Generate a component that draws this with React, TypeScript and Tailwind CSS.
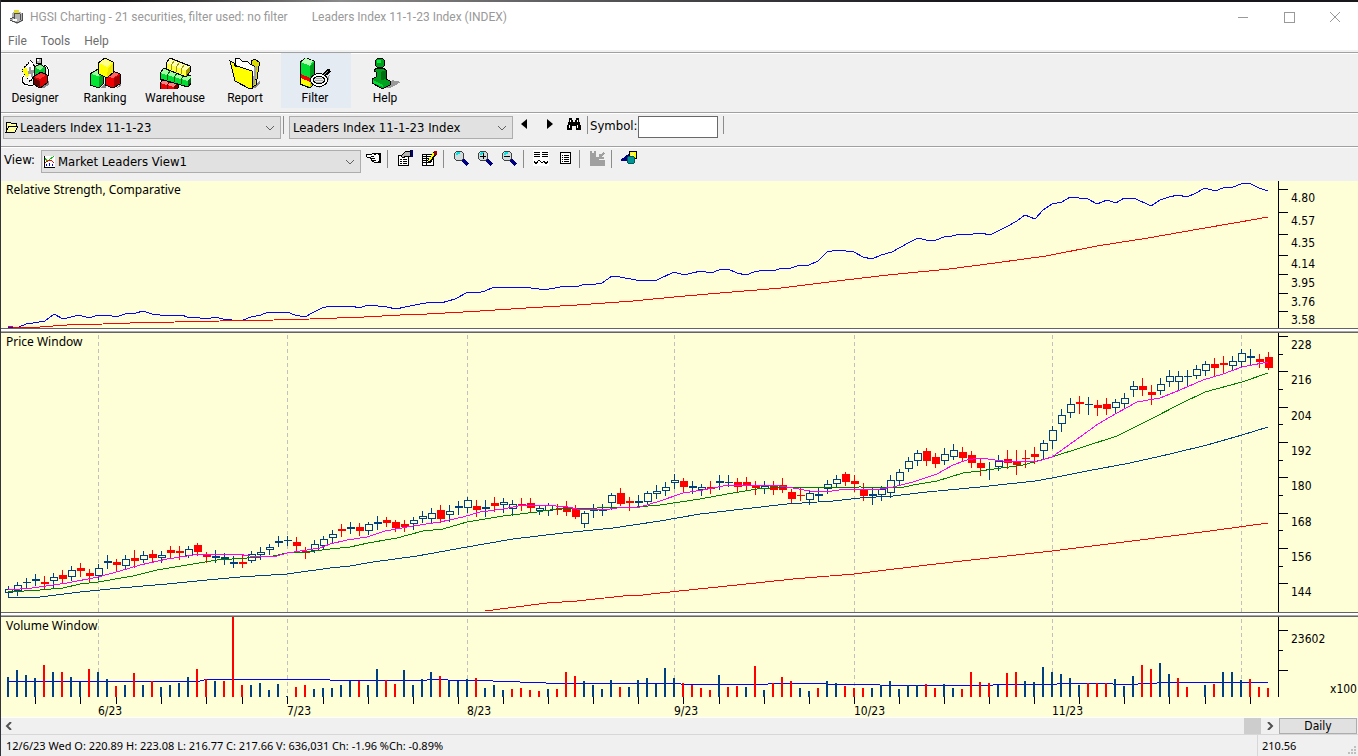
import type { ReactNode } from 'react';

// [rising, high, body top, body bottom, low, volume (negative = down day)]
type Bar = [number, number, number, number, number, number];

const BARS: Bar[] = [
    [1, 253, 256, 260, 265, 20], [1, 249, 252, 258, 263, 27], [1, 245, 249, 250, 256, 22], [1, 241, 246, 248, 253, 19],
    [0, 243, 249, 251, 256, -32], [1, 240, 244, 248, 256, 25], [0, 237, 242, 246, 251, -25], [1, 233, 237, 244, 248, 20],
    [0, 230, 235, 238, 244, 15], [0, 236, 240, 243, 249, -28], [1, 231, 235, 243, 247, 25], [1, 222, 228, 230, 236, 18],
    [0, 226, 229, 232, 239, -11], [1, 222, 226, 233, 236, 12], [0, 217, 225, 228, 235, -24], [1, 218, 222, 227, 230, 12],
    [0, 217, 221, 225, 230, -16], [1, 218, 222, 225, 230, 10], [0, 213, 217, 220, 226, 12], [0, 213, 218, 220, 227, 14],
    [1, 213, 216, 223, 225, 20], [0, 210, 212, 219, 223, -28], [0, 219, 222, 224, 230, -18], [1, 217, 223, 225, 230, 16],
    [1, 220, 224, 226, 232, -16], [1, 223, 229, 231, 235, -80], [0, 221, 229, 231, 235, -12], [1, 218, 221, 228, 230, 12],
    [1, 214, 219, 222, 227, 14], [1, 211, 214, 217, 222, 7], [1, 203, 208, 210, 214, 13], [1, 203, 207, 208, 213, 1],
    [0, 204, 209, 213, 218, -10], [0, 214, 218, 220, 226, -12], [1, 207, 211, 218, 220, 8], [1, 203, 206, 213, 216, 9],
    [1, 197, 201, 205, 210, 9], [0, 191, 196, 198, 204, 12], [1, 189, 194, 196, 201, 16], [0, 190, 194, 198, 203, -16],
    [1, 189, 191, 198, 202, 12], [1, 183, 189, 191, 197, 28], [0, 184, 187, 190, 194, -17], [0, 187, 189, 195, 199, -13],
    [0, 187, 191, 194, 199, 27], [1, 184, 187, 191, 197, 12], [1, 178, 183, 186, 190, 18], [1, 175, 180, 186, 191, 25],
    [0, 172, 177, 186, 190, -21], [1, 172, 178, 182, 189, 16], [1, 168, 173, 175, 182, 16], [1, 164, 167, 175, 180, 18],
    [0, 167, 173, 177, 184, -19], [1, 167, 174, 176, 184, 9], [0, 164, 170, 173, 179, 12], [1, 165, 169, 172, 180, 7],
    [1, 167, 171, 176, 183, -8], [0, 165, 171, 173, 178, -9], [0, 165, 170, 175, 180, -7], [1, 173, 175, 178, 182, -6],
    [1, 170, 172, 178, 183, 8], [0, 171, 176, 177, 182, -8], [0, 168, 174, 179, 183, -25], [0, 172, 176, 184, 186, -21],
    [1, 178, 180, 191, 195, 16], [1, 171, 177, 178, 185, 12], [1, 171, 176, 178, 183, 8], [1, 160, 162, 170, 177, 17],
    [0, 155, 160, 171, 173, -10], [0, 164, 168, 170, 178, 10], [1, 162, 168, 170, 175, 17], [1, 158, 160, 169, 172, 19],
    [1, 152, 158, 161, 166, 13], [1, 149, 154, 158, 163, 29], [1, 141, 147, 150, 156, 19], [0, 145, 148, 154, 160, -14],
    [1, 148, 153, 155, 161, -12], [1, 151, 154, 157, 163, -9], [0, 148, 154, 156, 161, -7], [1, 142, 148, 150, 157, 22],
    [1, 142, 149, 150, 154, -10], [0, 145, 149, 154, 159, -11], [0, 144, 149, 152, 157, 10], [0, 148, 153, 155, 162, -31],
    [1, 148, 153, 156, 161, 7], [0, 148, 153, 157, 162, -14], [0, 145, 152, 157, 160, -20], [0, 156, 159, 166, 170, -16],
    [0, 155, 162, 163, 168, 9], [1, 158, 160, 167, 172, 6], [1, 154, 161, 163, 168, -9], [1, 147, 151, 156, 161, 16],
    [1, 142, 146, 151, 155, 14], [0, 139, 141, 149, 153, -11], [0, 142, 148, 151, 159, -9], [0, 150, 157, 163, 168, -9],
    [1, 155, 161, 163, 172, 9], [1, 153, 156, 162, 168, 12], [1, 142, 147, 160, 165, 16], [1, 136, 139, 148, 152, 8],
    [1, 124, 128, 136, 139, 12], [1, 117, 120, 128, 133, 12], [0, 115, 118, 128, 133, -13], [0, 120, 124, 131, 135, -9],
    [1, 115, 121, 128, 132, 13], [1, 111, 117, 124, 127, 9], [0, 114, 119, 125, 129, -8], [0, 118, 122, 130, 135, -25],
    [0, 125, 130, 135, 143, -15], [1, 129, 136, 137, 147, -14], [1, 122, 128, 134, 138, 12], [0, 117, 126, 130, 136, -24],
    [0, 117, 129, 132, 142, -25], [0, 117, 125, 126, 135, 16], [0, 114, 121, 124, 131, 15], [1, 107, 110, 118, 126, 30],
    [1, 93, 97, 108, 116, 25], [1, 76, 82, 91, 99, 23], [1, 65, 71, 80, 85, 19], [0, 63, 69, 71, 81, 12],
    [1, 64, 71, 72, 82, -14], [0, 67, 72, 75, 83, -14], [0, 65, 71, 76, 82, -14], [1, 66, 69, 75, 80, 18],
    [1, 60, 65, 71, 75, 11], [1, 48, 53, 57, 64, 21], [0, 45, 53, 57, 63, -32], [0, 52, 59, 62, 72, -28],
    [1, 45, 51, 58, 62, 34], [1, 37, 43, 49, 54, 23], [1, 38, 43, 49, 57, -19], [1, 37, 43, 44, 53, -10],
    [1, 32, 36, 43, 46, 0], [1, 28, 31, 38, 43, 12], [0, 25, 31, 35, 43, -13], [0, 23, 30, 32, 41, 25],
    [1, 23, 28, 33, 38, 25], [1, 16, 20, 29, 34, 17], [1, 16, 23, 25, 32, -18], [0, 21, 26, 29, 35, -10],
    [0, 19, 24, 35, 37, -9],
];

const RS_LINE = '8,146 19,146 26,143 33,142 45,140 54,133 63,138 71,136 79,134 89,137 98,134 108,134 116,136 125,133 136,132 143,130 152,133 160,134 182,134 187,136 200,137 207,138 215,136 223,138 232,139 243,139 251,136 261,134 268,131 287,131 295,134 305,136 312,132 322,127 330,125 352,125 359,127 368,124 387,126 396,128 405,126 420,123 432,121 441,122 455,118 468,111 477,112 485,110 494,106 515,107 523,106 539,108 549,108 566,105 576,106 585,103 596,103 602,102 612,95 620,96 636,99 657,99 674,91 684,94 692,92 701,90 711,92 719,89 728,88 737,92 746,94 754,91 764,89 773,90 782,87 791,87 800,84 809,84 818,80 827,71 837,69 854,71 863,76 872,78 881,74 892,71 899,67 910,61 918,57 926,59 936,59 944,56 952,55 960,53 973,53 981,52 990,54 998,50 1008,45 1017,40 1025,34 1035,38 1043,29 1052,23 1062,21 1070,16 1088,18 1097,23 1107,19 1116,22 1124,17 1134,17 1151,25 1160,19 1169,16 1178,14 1187,16 1196,12 1205,7 1215,10 1223,7 1233,6 1241,3 1249,2 1259,7 1268,10';
const RS_AVG = '8,145 13,146 40,146 67,144 103,143 130,142 175,141 220,140 274,139 310,138 337,137 364,136 400,134 427,133 463,131 480,130 526,127 577,124 633,120 674,116 720,112 781,107 837,100 888,94 949,88 995,82 1046,75 1097,65 1148,57 1199,48 1240,41 1268,36';
const MA_10 = '8,257 32,255 67,250 98,244 120,238 140,232 167,226 200,221 237,221 250,223 277,223 287,220 307,217 320,215 330,211 347,207 367,204 385,198 402,195 413,193 440,189 463,184 480,179 503,176 523,172 543,172 568,174 577,176 603,177 617,175 640,174 650,171 660,168 683,160 703,157 723,153 743,152 773,152 793,155 810,158 832,158 847,156 880,156 893,154 913,149 937,141 953,132 967,127 980,125 1003,128 1035,129 1052,124 1080,104 1098,91 1117,80 1137,69 1160,65 1180,57 1203,47 1223,41 1242,34 1268,29';
const MA_17 = '8,259 40,257 63,255 80,251 98,249 133,243 157,237 193,231 217,227 247,225 273,223 287,220 307,219 330,216 350,214 368,210 397,205 423,198 443,196 467,189 503,183 537,179 563,175 597,175 637,174 660,172 700,166 727,161 757,156 783,154 827,155 860,154 900,155 913,152 937,148 963,140 980,138 1023,132 1052,124 1080,115 1117,103 1153,85 1180,71 1205,59 1242,49 1268,40';
const MA_50 = '8,265 40,264 80,259 120,255 167,251 207,247 240,244 287,241 330,235 350,233 373,229 417,223 467,214 513,206 563,200 613,195 660,188 700,181 743,176 787,171 833,168 860,165 893,163 927,159 980,154 1035,148 1052,145 1087,138 1130,130 1170,121 1207,112 1242,102 1268,94';
const MA_200 = '485,278 547,270 577,268 623,263 643,262 660,260 737,252 793,246 854,241 927,232 980,226 1052,218 1140,207 1210,198 1268,190';
const VOL_AVG = '8,64 13,64 77,65 93,64 200,64 204,63 230,62 327,62 330,63 427,63 430,62 445,62 448,63 490,63 493,64 517,64 520,65 543,65 546,66 678,66 681,67 768,67 771,66 823,66 826,67 877,67 880,68 993,68 996,67 1057,67 1060,66 1110,66 1113,67 1138,67 1141,66 1157,66 1160,65 1268,65';

const MONTHS = [
    { bar: 10, label: '6/23' },
    { bar: 31, label: '7/23' },
    { bar: 51, label: '8/23' },
    { bar: 74, label: '9/23' },
    { bar: 94, label: '10/23' },
    { bar: 116, label: '11/23' },
    { bar: 137, label: '' },
];
const WEEKS = [3, 8, 12, 17, 22, 26, 31, 35, 40, 45, 50, 55, 60, 65, 70, 75, 79, 84, 89, 94, 99, 104, 109, 114, 119, 124, 129, 133, 138];

const RS_TICKS: [number, string][] = [[8, '4.80'], [31, '4.57'], [53, '4.35'], [74, '4.14'], [93, '3.95'], [112, '3.76'], [130, '3.58']];
const PRICE_TICKS: [number, string][] = [[3, '228'], [38, '216'], [74, '204'], [109, '192'], [144, '180'], [180, '168'], [215, '156'], [250, '144']];
const VOL_TICKS: [number, string][] = [[13, '23602'], [53, '']];

const barX = (i: number) => 8 + i * 9;

function Line({ points, color }: { points: string; color: string }) {
    return <polyline points={points} fill="none" stroke={color} strokeWidth="1" />;
}

function MonthGrid({ height }: { height: number }) {
    return (
        <g stroke="#c0c0c0" strokeDasharray="4 3">
            {MONTHS.map((m) => (
                <path key={m.bar} d={`M${barX(m.bar)} 2V${height}`} />
            ))}
        </g>
    );
}

function Axis({ ticks, minor = [], height, children }: { ticks: [number, string][]; minor?: number[]; height: number; children?: ReactNode }) {
    return (
        <svg className="h-full w-20 shrink-0" shapeRendering="crispEdges">
            <rect width="1" height={height} />
            {minor.map((y) => (
                <rect key={y} y={y} width="5" height="1" />
            ))}
            {ticks.map(([y, label]) => (
                <g key={y}>
                    <rect y={y} width="10" height="1" />
                    <text x="13" y={y + 13}>{label}</text>
                </g>
            ))}
            {children}
        </svg>
    );
}

function Panel({ title, className, children, axis }: { title: string; className: string; children: ReactNode; axis: ReactNode }) {
    return (
        <section className={`flex bg-[#ffffd7] text-xs ${className}`} aria-label={title}>
            <svg className="h-full min-w-0 flex-1" shapeRendering="crispEdges">
                <g transform="translate(-1 0)">
                    {children}
                    <text x="6" y="13" className="font-['Noto_Sans',sans-serif]">{title}</text>
                </g>
            </svg>
            {axis}
        </section>
    );
}

function Splitter() {
    return <div className="h-[5px] shrink-0 border-y border-[#646464] bg-white shadow-[inset_0_-1px_0_#a8a8a8]" />;
}

function Separator() {
    return <div className="h-[18px] w-px shrink-0 bg-[#8c8c8c]" />;
}

/* Toolbar pictures, drawn on a 32px grid */
function DesignerIcon() {
    return (
        <svg className="size-8" viewBox="0 0 32 32" shapeRendering="crispEdges">
            <path d="M22 31l8-8v5l-5 3z" fill="#888" />
            <path d="M3 13L12 3l6 11-7 11z" fill="#fff" stroke="#000" strokeDasharray="2 1" />
            <path d="M3 13l4-4 3 9-2 3z" fill="#ffff00" />
            <path d="M10 10h2v3h4v3h-2v4h-2v-3h-3v-3h1z" fill="#999" />
            <path d="M25 8c6 2 6 11 1 16M5 19c-4 4-1 9 4 9h5" fill="none" stroke="#fff" strokeWidth="3" />
            <path d="M25 8c6 2 6 11 1 16M5 19c-4 4-1 9 4 9h5" fill="none" stroke="#000" />
            <path d="M15 10l6-3 5 3v9H15z" fill="#00c832" stroke="#000" />
            <path d="M16 10l5-2 4 2-4 3z" fill="#8cf08c" />
            <circle cx="20" cy="4" r="3" fill="#b4b4b4" stroke="#000" />
            <rect x="18" y="2" width="2" height="2" fill="#fff" />
            <path d="M14 20l8-5 6 3v8l-7 5-7-4z" fill="#dc0000" stroke="#000" />
            <path d="M15 21l6 3v6l-6-3z" fill="#640000" />
            <path d="M15 20l7-4 5 2-6 4z" fill="#ff3232" />
        </svg>
    );
}

function RankingIcon() {
    return (
        <svg className="size-8" viewBox="0 0 32 32" shapeRendering="crispEdges">
            <path d="M12 31l5-6v6zM28 31l4-6v4z" fill="#888" />
            <path d="M1 17l8-5 5 3v12l-4 4-9-3z" fill="#00e632" stroke="#000" />
            <path d="M10 20l4-4v10l-4 4z" fill="#00a020" />
            <path d="M2 17l7-4 4 2-4 4z" fill="#a0ffa0" />
            <path d="M16 20l8-6 7 3v10l-7 4-8-3z" fill="#f00000" stroke="#000" />
            <path d="M25 21l6-3v8l-6 4z" fill="#a00000" />
            <path d="M17 19l7-4 6 2-6 4z" fill="#ff6464" />
            <path d="M9 6l7-5 8 4 1 10-7 6-8-4z" fill="#ffff00" stroke="#000" />
            <path d="M19 11l5-4v8l-6 5z" fill="#f0e600" />
            <path d="M10 6l6-4 7 4-5 4z" fill="#ffff8c" />
        </svg>
    );
}

/* A slanted row of n boxes, each one `step` wide */
function BoxRow({ x, y, n, step, fill, side, top }: { x: number; y: number; n: number; step: number; fill: string; side: string; top: string }) {
    const w = n * step;
    const drop = n * 2;
    return (
        <g transform={`translate(${x} ${y})`}>
            <path d={`M0 5L${w} ${5 + drop}v6L0 11z`} fill={fill} />
            <path d={`M0 5l4-5L${w + 4} ${drop}l-4 5z`} fill={top} />
            <path d={`M${w} ${5 + drop}l4-5v6l-4 5z`} fill={side} />
            {Array.from({ length: n - 1 }, (_, i) => (
                <path key={i} d={`M${(i + 1) * step} ${7 + i * 2}v5M${(i + 1) * step} ${7 + i * 2}l4-5`} stroke={side} />
            ))}
            <path d={`M0 5l4-5L${w + 4} ${drop}v6l-4 5L0 11z`} fill="none" stroke="#000" />
        </g>
    );
}

function WarehouseIcon() {
    return (
        <svg className="size-8" viewBox="0 0 32 32" shapeRendering="crispEdges">
            <BoxRow x={1} y={21} n={2} step={7} fill="#f00000" side="#780000" top="#ff8080" />
            <BoxRow x={1} y={11} n={4} step={7} fill="#00dc32" side="#006414" top="#a0ffa0" />
            <BoxRow x={7} y={1} n={4} step={5} fill="#ffff3c" side="#a09600" top="#ffffb4" />
        </svg>
    );
}

function ReportIcon() {
    return (
        <svg className="size-8" viewBox="0 0 32 32" shapeRendering="crispEdges">
            <path d="M24 31l7-8v3l-4 5z" fill="#888" />
            <path d="M22 4l4-2 4 3v4l-3 19-4 2z" fill="#dcdc00" stroke="#000" />
            <path d="M6 8V1l5 1 3 3 4-1 3 3 4 2 1 13z" fill="#fff" stroke="#000" />
            <path d="M25 10l3-1-2 17-2 2z" fill="#a0a0a0" />
            <path d="M1 4l4 2 1 3 5 1 12 4 1 17-3 1-15-8z" fill="#ffff00" stroke="#000" />
        </svg>
    );
}

function FilterIcon() {
    return (
        <svg className="size-8" viewBox="0 0 32 32" shapeRendering="crispEdges">
            <path d="M20 31l9-6 2-8-8 8z" fill="#999" />
            <path d="M1 5l6-4 8 3v22l-4 5-10-4z" fill="#00dc32" stroke="#000" />
            <path d="M2 5l5-4 7 3-3 5z" fill="#b4ffb4" />
            <path d="M11 10l4-5v12l-4 4z" fill="#00a01e" />
            <path d="M2 17l9 4 4-3v4l-4 3-9-4z" fill="#f00000" />
            <path d="M2 21l9 4v5l-9-3z" fill="#ffff00" />
            <path d="M11 25l4-3v4l-4 4z" fill="#d2c800" />
            <path d="M25 18l6-5" stroke="#000" strokeWidth="4" />
            <path d="M25 18l4-4" stroke="#aaa" />
            <ellipse cx="20" cy="23" rx="7" ry="5" fill="#e6e6e6" stroke="#000" strokeWidth="4" />
            <ellipse cx="20" cy="23" rx="7" ry="5" fill="none" stroke="#fff" strokeWidth="2" />
            <path d="M16 23h8M17 21h6M17 25h6" stroke="#aaa" />
        </svg>
    );
}

function HelpIcon() {
    return (
        <svg className="size-8" viewBox="0 0 32 32" shapeRendering="crispEdges">
            <path d="M15 31l8-8 9 2-5 3-6 3z" fill="#999" />
            <path d="M5 13l3-2h6l3 2v9l4 2v4l-6 3h-3L3 26v-4l4-2v-5l-2-1z" fill="#00a01e" stroke="#000" />
            <path d="M12 15l5-2v9l-5 1z" fill="#006e14" />
            <path d="M4 23l10 5v2L4 26z" fill="#00dc32" />
            <circle cx="11" cy="6" r="5" fill="#00a01e" stroke="#000" />
            <path d="M8 3h4v3H8z" fill="#00f03c" />
        </svg>
    );
}

/* Small 16px icons */
function SmallIcon({ children }: { children: ReactNode }) {
    return (
        <svg className="size-4" viewBox="0 0 16 16" shapeRendering="crispEdges" fill="none" stroke="#000">
            {children}
        </svg>
    );
}

function Magnifier({ sign }: { sign?: string }) {
    return (
        <SmallIcon>
            <path d="M10 10l5 5" stroke="#000080" strokeWidth="3" />
            <circle cx="6" cy="6" r="5" fill="#d2dcdc" stroke="#404040" />
            <path d="M3 5l2-2h2" stroke="#00e6e6" strokeWidth="2" />
            {sign && <path d={sign} />}
        </SmallIcon>
    );
}

const TOOLS = [
    { label: 'Designer', icon: <DesignerIcon /> },
    { label: 'Ranking', icon: <RankingIcon /> },
    { label: 'Warehouse', icon: <WarehouseIcon /> },
    { label: 'Report', icon: <ReportIcon /> },
    { label: 'Filter', icon: <FilterIcon />, active: true },
    { label: 'Help', icon: <HelpIcon /> },
];

function Combo({ label, value, className, pad, icon }: { label: string; value: string; className: string; pad: string; icon?: ReactNode }) {
    return (
        <div className={`relative h-[23px] ${className}`}>
            <select aria-label={label} className={`block h-full w-full appearance-none border border-[#adadad] bg-[#e1e1e1] text-[13px] leading-5 ${pad}`}>
                <option>{value}</option>
            </select>
            {icon && <span className="pointer-events-none absolute top-1 left-0.5">{icon}</span>}
            <svg className="pointer-events-none absolute top-2 right-1.5 h-2 w-2.5" viewBox="0 0 10 8" fill="none" stroke="#606060">
                <path d="M1 2l4 4 4-4" />
            </svg>
        </div>
    );
}

function IconButton({ label, className, children }: { label: string; className?: string; children: ReactNode }) {
    return (
        <button type="button" aria-label={label} className={`flex h-4 w-4 shrink-0 items-center justify-center ${className ?? ''}`}>
            {children}
        </button>
    );
}

export default function App() {
    return (
        <div className="flex min-h-screen flex-col overflow-hidden border-l border-[#33333b] bg-[#f0f0f0] font-['DejaVu_Sans_Condensed','DejaVu_Sans',sans-serif] text-black">
            <div className="h-0.5 bg-linear-to-r from-[#141414] from-8% via-[#8a8a8a] via-25% to-[#17171c] to-70%" />

            {/* Title bar */}
            <header className="flex h-[30px] items-center bg-white pr-[17px] pl-2 font-['Roboto',sans-serif] text-xs text-[#999999]">
                <svg className="size-4" viewBox="0 0 16 16" shapeRendering="crispEdges">
                    <path d="M1 10l2-1V4l3-2 6 1 2 3v6l-6 3-7-4z" fill="#b4b4b4" />
                    <path d="M5 1h5v3H5z" fill="#e6dc28" />
                    <path d="M5 4v6M6 4l5 1v6M13 4v8M1 11l7 3 6-3M1 10l4-2" fill="none" stroke="#505050" />
                    <path d="M4 10h4v2H4z" fill="#fff" />
                </svg>
                <h1 className="ml-[5px] whitespace-nowrap">HGSI Charting - 21 securities, filter used: no filter</h1>
                <span className="ml-6 whitespace-nowrap">Leaders Index 11-1-23 Index (INDEX)</span>
                <div className="ml-auto flex gap-[34px]">
                    <button type="button" aria-label="Minimize"><svg className="size-3" viewBox="0 0 12 12" stroke="#999" shapeRendering="crispEdges"><path d="M1 6h10" /></svg></button>
                    <button type="button" aria-label="Maximize"><svg className="size-3" viewBox="0 0 12 12" stroke="#999" fill="none" shapeRendering="crispEdges"><path d="M1 1h10v10H1z" /></svg></button>
                    <button type="button" aria-label="Close"><svg className="size-3" viewBox="0 0 12 12" stroke="#999"><path d="M1 1l10 10M11 1L1 11" /></svg></button>
                </div>
            </header>

            {/* Menu */}
            <nav className="flex h-[18px] items-center gap-3.5 bg-white pl-[7px] font-['Roboto',sans-serif] text-xs text-[#6d6d6d]">
                <button type="button">File</button>
                <button type="button">Tools</button>
                <button type="button">Help</button>
            </nav>

            {/* Main toolbar */}
            <div className="mt-0.5 flex h-[60px] border-t border-[#a0a0a0] pb-1 shadow-[inset_0_1px_0_#fff]">
                {TOOLS.map((t) => (
                    <button key={t.label} type="button" className={`flex w-[70px] flex-col items-center pt-1 pr-0.5 font-['Roboto',sans-serif] text-xs leading-[18px] ${t.active ? 'bg-[#e5ebf3]' : ''}`}>
                        {t.icon}
                        <span>{t.label}</span>
                    </button>
                ))}
            </div>

            {/* Security selection */}
            <div className="flex h-[34px] items-start border-t border-[#a0a0a0] pt-[3px] pl-0.5 shadow-[inset_0_1px_0_#fff]">
                <Combo
                    label="Group"
                    value="Leaders Index 11-1-23"
                    className="w-[278px]"
                    pad="pl-4"
                    icon={
                        <svg className="h-3.5 w-3.5" viewBox="0 0 14 14" shapeRendering="crispEdges">
                            <path d="M1 12V3l1-1h3l1 1h5v3" fill="#ffffa0" stroke="#000" />
                            <path d="M1 12l3-6h9l-3 6z" fill="#ffffa0" stroke="#000" />
                        </svg>
                    }
                />
                <div className="mx-0.5"><Separator /></div>
                <Combo label="Security" value="Leaders Index 11-1-23 Index" className="ml-[3px] w-56" pad="pl-[3px]" />
                <IconButton label="Previous" className="ml-[3px]"><svg className="h-2.5 w-1.5" viewBox="0 0 6 10"><path d="M6 0v10L0 5z" /></svg></IconButton>
                <IconButton label="Next" className="ml-2.5"><svg className="h-2.5 w-1.5" viewBox="0 0 6 10"><path d="M0 0v10l6-5z" /></svg></IconButton>
                <IconButton label="Find" className="ml-2">
                    <SmallIcon>
                        <path d="M3 2h3v2h1v2h2V4h1V2h3v3l2 5v4h-5v-4H6v4H1v-4l2-5z" fill="#000" stroke="none" />
                        <path d="M4 4v2M11 4v2M3 9v3M11 9v3" stroke="#fff" />
                    </SmallIcon>
                </IconButton>
                <div className="mr-0.5 ml-[5px]"><Separator /></div>
                <label htmlFor="symbol" className="text-[13px] leading-5">Symbol:</label>
                <input id="symbol" type="text" className="h-[22px] w-20 border border-[#696969] bg-white px-1 text-[13px]" />
                <div className="ml-[5px]"><Separator /></div>
            </div>

            {/* View toolbar */}
            <div className="flex h-[35px] items-start border-t border-[#a0a0a0] pt-[3px] pl-[3px] shadow-[inset_0_1px_0_#fff]">
                <span className="text-[13px] leading-5">View:</span>
                <Combo
                    label="View"
                    value="Market Leaders View1"
                    className="ml-1.5 w-80"
                    pad="pl-4"
                    icon={
                        <svg className="h-3.5 w-3" viewBox="0 0 12 14" shapeRendering="crispEdges" fill="none">
                            <path d="M0 2h12v11H0z" fill="#fff" />
                            <path d="M1 3l3 4 2-1 5-4" stroke="#00c800" />
                            <path d="M1 9l4-2 3-1 3 3" stroke="#f00" />
                            <path d="M3 12v-2M6 12V9M9 12v-2" stroke="#00f" />
                            <path d="M1 2v11h11" stroke="#000" />
                        </svg>
                    }
                />
                <IconButton label="Point" className="ml-1">
                    <SmallIcon>
                        <path d="M1 5l1-1h5l2-1h4v9H9l-2-1-1-2-1-1 1-1H2z" fill="#fff" />
                        <path d="M6 6h3M6 8h4M7 10h4M9 4l2 1" />
                        <path d="M14 3v10" strokeWidth="3" />
                        <path d="M13 5v6" stroke="#fff" />
                    </SmallIcon>
                </IconButton>
                <div className="mr-[9px] ml-1.5"><Separator /></div>
                <IconButton label="Properties">
                    <SmallIcon>
                        <path d="M1 5h10v10H1z" fill="#fff" />
                        <path d="M3 9h2M6 9h4M3 11h2M6 11h4M3 13h2M6 13h4" />
                        <path d="M4 6l4-4 5-1v5H9L6 8z" fill="#b4b4b4" />
                        <path d="M15 0v7" stroke="#000080" strokeWidth="2" />
                    </SmallIcon>
                </IconButton>
                <IconButton label="Edit" className="ml-2">
                    <SmallIcon>
                        <path d="M1 4h11v11H1z" fill="#fff" />
                        <path d="M1 6h11M2 8h7M2 10h7M2 12h7M5 4v11" />
                        <path d="M8 12l6-9" strokeWidth="4" />
                        <path d="M8 11l5-8" stroke="#ffff00" strokeWidth="2" />
                        <path d="M13 1h2v3h-2z" fill="#a00000" stroke="#a00000" />
                    </SmallIcon>
                </IconButton>
                <div className="mr-[9px] ml-1.5"><Separator /></div>
                <IconButton label="Zoom"><Magnifier /></IconButton>
                <IconButton label="Zoom in" className="ml-2"><Magnifier sign="M3 6h6M6 3v6" /></IconButton>
                <IconButton label="Zoom out" className="ml-2"><Magnifier sign="M3 6h6" /></IconButton>
                <div className="mr-[9px] ml-1.5"><Separator /></div>
                <IconButton label="Chart list">
                    <SmallIcon>
                        <path d="M0 0h16v16H0z" fill="#fff" stroke="none" />
                        <path d="M1 2h6M9 2h6M1 4h6M9 4h6M1 6h6M9 6h6" />
                        <path d="M1 11l2 3 3-4 3 3 2-2 2 3 2-3" />
                    </SmallIcon>
                </IconButton>
                <IconButton label="Report list" className="ml-2">
                    <SmallIcon>
                        <path d="M3 2h10v11H3z" fill="#fff" />
                        <path d="M5 5h1M7 5h5M5 7h1M7 7h5M5 9h1M7 9h5M5 11h1M7 11h5" />
                    </SmallIcon>
                </IconButton>
                <div className="mr-[9px] ml-1.5"><Separator /></div>
                <IconButton label="Export">
                    <SmallIcon>
                        <path d="M1 1h2v2h2V1h2v6h3v3h6v6H1z" fill="#a0a0a0" stroke="none" />
                        <path d="M15 3l-4 4M11 4v4h4" stroke="#a0a0a0" strokeWidth="2" />
                    </SmallIcon>
                </IconButton>
                <div className="mr-[9px] ml-1.5"><Separator /></div>
                <IconButton label="Shapes">
                    <SmallIcon>
                        <path d="M8 1h7v7H8z" fill="#ffff00" />
                        <path d="M10 3l3 3M13 3l-3 3" stroke="#fff" />
                        <path d="M0 10l7-5v5z" fill="#000080" stroke="#000080" />
                        <circle cx="10" cy="10" r="4" fill="#009696" stroke="#005a5a" />
                    </SmallIcon>
                </IconButton>
            </div>

            <Panel
                title="Relative Strength, Comparative"
                className="h-[147px]"
                axis={<Axis ticks={RS_TICKS} height={147} />}
            >
                <Line points={RS_LINE} color="#0000ff" />
                <Line points={RS_AVG} color="#ff0000" />
            </Panel>
            <Splitter />
            <Panel
                title="Price Window"
                className="h-[279px]"
                axis={<Axis ticks={PRICE_TICKS} minor={[21, 56, 91, 127, 162, 197, 233]} height={279} />}
            >
                <MonthGrid height={279} />
                {BARS.map(([up, high, top, bottom, low], i) => {
                    const x = barX(i);
                    const color = up ? '#004080' : '#ff0000';
                    return (
                        <g key={i} fill={color}>
                            <rect x={x} y={high} width="1" height={low - high} />
                            <rect x={x - 3} y={top} width="8" height={bottom - top} />
                            {up === 1 && bottom - top > 2 && (
                                <rect x={x - 2} y={top + 1} width="6" height={bottom - top - 2} fill="#ffffd7" />
                            )}
                        </g>
                    );
                })}
                <Line points={MA_50} color="#004080" />
                <Line points={MA_17} color="#008000" />
                <Line points={MA_200} color="#ff0000" />
                <Line points={MA_10} color="#ff00ff" />
            </Panel>
            <Splitter />
            <Panel
                title="Volume Window"
                className="h-[100px]"
                axis={
                    <Axis ticks={VOL_TICKS} minor={[33]} height={80}>
                        <text x="79" y="76" textAnchor="end">x100</text>
                    </Axis>
                }
            >
                <MonthGrid height={80} />
                <Line points={VOL_AVG} color="#0000ff" />
                {BARS.map(([, , , , , vol], i) => (
                    <rect key={i} x={barX(i) - 1} y={80 - Math.abs(vol)} width="2" height={Math.abs(vol)} fill={vol < 0 ? '#ff0000' : '#004080'} />
                ))}
                {WEEKS.map((w) => (
                    <rect key={w} x={barX(w)} y="80" width="1" height="7" />
                ))}
                {MONTHS.map((m) => (
                    <text key={m.bar} x={barX(m.bar)} y="98">{m.label}</text>
                ))}
            </Panel>

            {/* Scroll bar */}
            <div className="flex h-[17px] items-center border-t border-white">
                <button type="button" aria-label="Scroll left" className="w-4 pl-1">
                    <svg className="h-2 w-2" viewBox="0 0 8 8" fill="none" stroke="#505050" strokeWidth="2"><path d="M6 0L2 4l4 4" /></svg>
                </button>
                <div className="flex h-full flex-1 justify-end">
                    <div className="w-[17px] bg-[#cdcdcd]" />
                </div>
                <button type="button" aria-label="Scroll right" className="w-[18px] pl-[5px]">
                    <svg className="h-2 w-2" viewBox="0 0 8 8" fill="none" stroke="#505050" strokeWidth="2"><path d="M2 0l4 4-4 4" /></svg>
                </button>
                <button type="button" className="mr-px h-4 w-[78px] border border-[#adadad] bg-[#e1e1e1] text-xs leading-3">Daily</button>
            </div>

            {/* Status bar */}
            <footer className="flex h-[22px] items-stretch border-t border-[#d7d7d7] font-['Noto_Sans',sans-serif] text-[11px] leading-[22px]">
                <p className="flex-1 pl-[5px]">12/6/23 Wed O: 220.89 H: 223.08 L: 216.77 C: 217.66 V: 636,031 Ch: -1.96 %Ch: -0.89%</p>
                <p className="w-[101px] border-l border-[#d7d7d7] pl-1">210.56</p>
                <svg className="-ml-3 h-3 w-3 self-end" viewBox="0 0 12 12" fill="#bfbfbf" shapeRendering="crispEdges">
                    <path d="M8 2h2v2H8zM5 5h2v2H5zM8 5h2v2H8zM2 8h2v2H2zM5 8h2v2H5zM8 8h2v2H8z" />
                </svg>
            </footer>
        </div>
    );
}
